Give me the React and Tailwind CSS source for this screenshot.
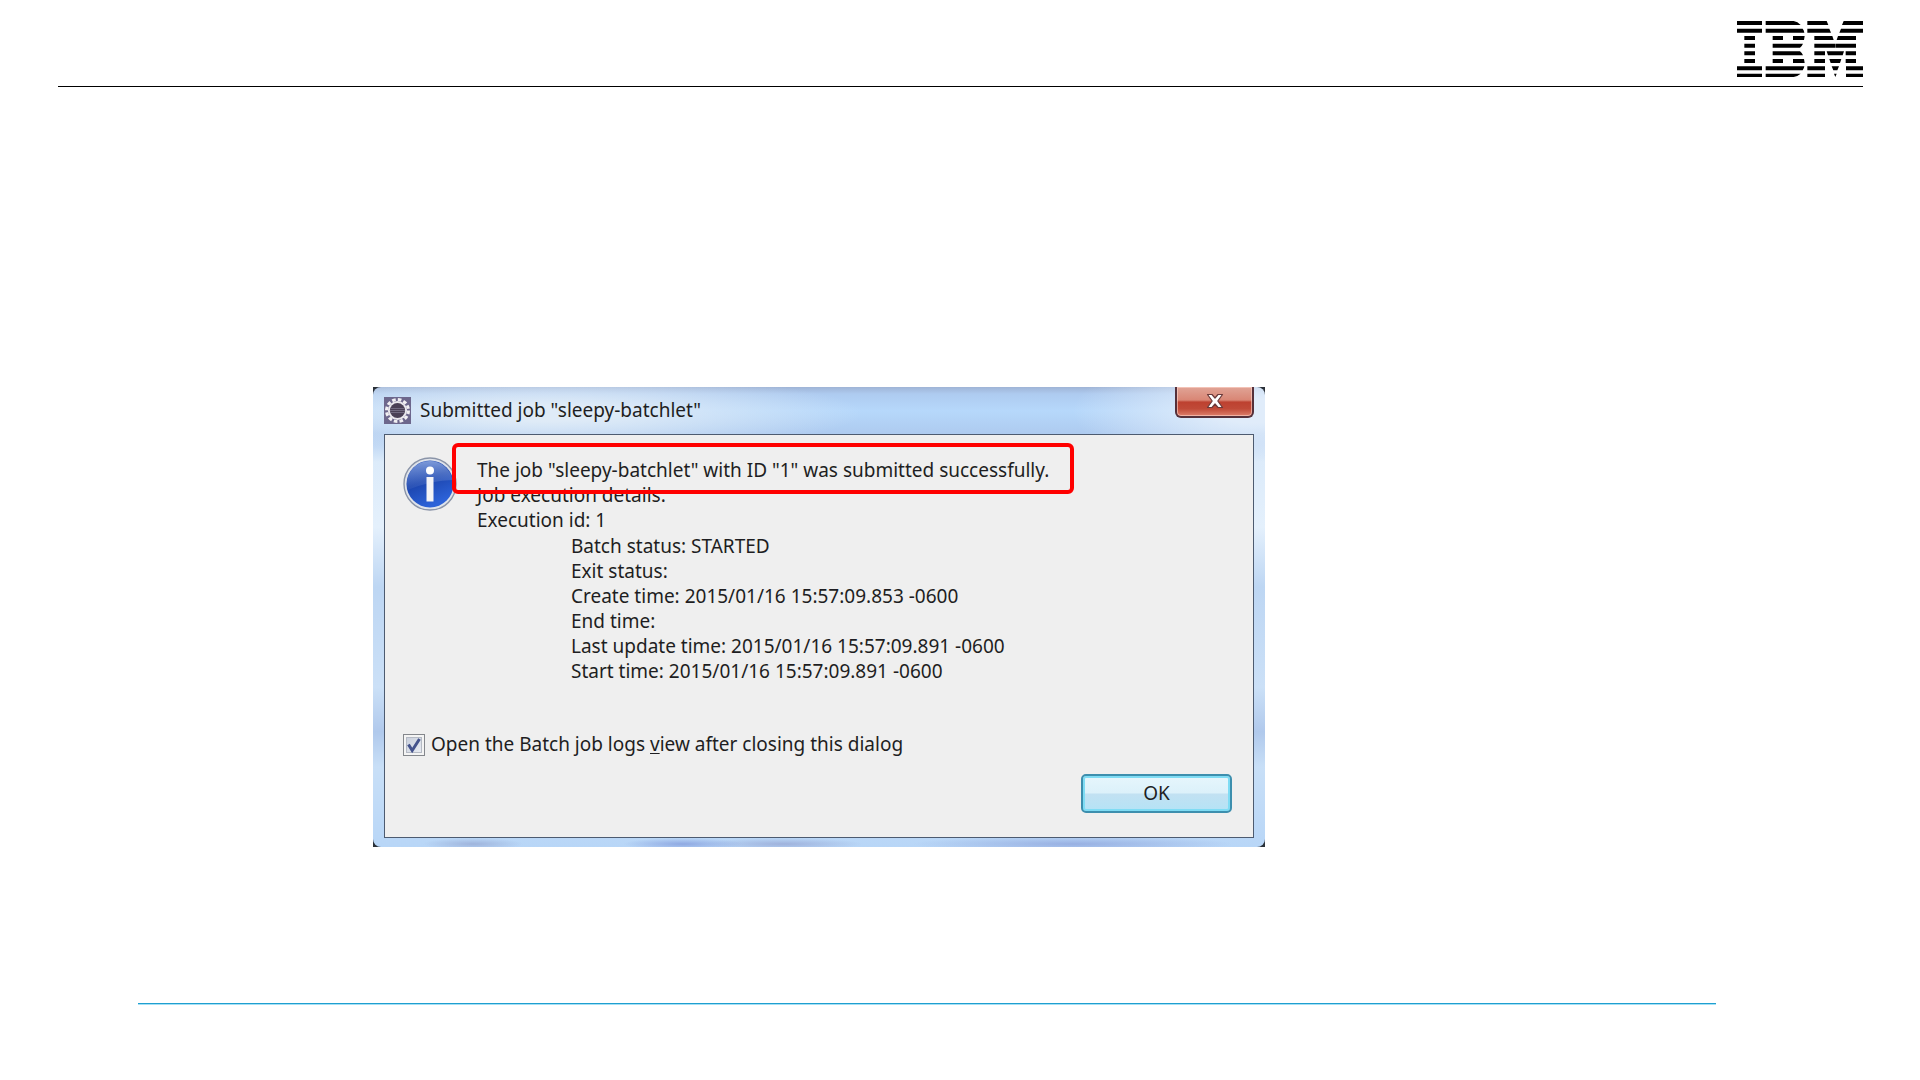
const JOB_DETAILS = [
  'Batch status: STARTED',
  'Exit status:',
  'Create time: 2015/01/16 15:57:09.853 -0600',
  'End time:',
  'Last update time: 2015/01/16 15:57:09.891 -0600',
  'Start time: 2015/01/16 15:57:09.891 -0600',
];

function IbmLogo() {
  return (
    <svg viewBox="51 33 378 168" className="w-[126px] h-14" role="img" aria-label="IBM">
      {/* I */}
      <path d="M51 33h75v12H51zM51 56h75v12H51zM73 78h32v12H73zM73 101h32v12H73zM73 124h32v12H73zM73 147h32v12H73zM51 169h75v12H51zM51 191h75v10H51z" />
      {/* B */}
      <path d="M137 33h84q12 2 21 12H137zM137 56h111q4 5 5 12H137zM158 78h31v12h-31zM219 78h35l-2 12h-33zM158 101h91q-3 7-9 12h-82zM158 124h82q6 5 9 12h-91zM158 147h31v12h-31zM219 147h33l2 12h-35zM137 169h116q-1 7-5 12H137zM137 191h105q-9 8-21 10h-84z" />
      {/* M */}
      <path d="M262 33h58l5 12h-63zM371 33h58v12h-63zM262 56h66l5 12h-71zM363 56h66v12h-71zM283 78h54l4 12h-58zM354 78h54v12h-58zM283 101h62v12h-62zM346 101h62v12h-62zM283 124h32v12h-32zM320 124h52l-4 12h-44zM377 124h31v12h-31zM283 147h32v12h-32zM328 147h36l-4 12h-28zM377 147h31v12h-31zM262 169h53v12h-53zM335 169h22l-5 12h-12zM378 169h51v12h-51zM262 191h53v10h-53zM342 191h8l-4 10zM378 191h51v10h-51z" />
    </svg>
  );
}

function EclipseIcon() {
  return (
    <svg viewBox="0 0 27 27" className="w-[27px] h-[27px]" aria-hidden="true">
      <rect width="27" height="27" fill="#6d678c" />
      <circle cx="13.5" cy="13.5" r="11" fill="none" stroke="#f1eff2" strokeWidth="3" strokeDasharray="3.6 2.16" />
      <circle cx="13.5" cy="13.5" r="9.6" fill="#e9e7ec" />
      <circle cx="13.5" cy="13.5" r="7.6" fill="#4a4055" />
      <path d="M6.5 11.5h14M6 13.5h15M6.5 15.5h14" stroke="#7b758c" strokeWidth="0.8" />
    </svg>
  );
}

function InfoIcon() {
  return (
    <svg viewBox="0 0 54 54" className="w-[54px] h-[54px] shrink-0" aria-hidden="true">
      <defs>
        <linearGradient id="info-fill" x1="0" y1="0" x2="0.4" y2="1">
          <stop offset="0" stopColor="#3f66c4" />
          <stop offset="0.5" stopColor="#1c45ae" />
          <stop offset="1" stopColor="#2c62d8" />
        </linearGradient>
        <linearGradient id="info-gloss" x1="0" y1="0" x2="0" y2="1">
          <stop offset="0" stopColor="#8fa9df" stopOpacity="0.8" />
          <stop offset="1" stopColor="#4f73c8" stopOpacity="0.2" />
        </linearGradient>
      </defs>
      <circle cx="27" cy="27" r="26" fill="#dfe3ea" stroke="#8a94a8" strokeWidth="1.4" />
      <circle cx="27" cy="27" r="23.5" fill="url(#info-fill)" />
      <path d="M27 4a23 23 0 0 1 22.5 19q-20 0-45 10a23 23 0 0 1 22.5-29z" fill="url(#info-gloss)" />
      <circle cx="27" cy="13.5" r="4" fill="#fff" />
      <path d="M23.5 20h7v24.5h-7z" fill="#f3f3f6" />
    </svg>
  );
}

function CloseIcon() {
  return (
    <svg viewBox="0 0 18 16" className="w-[18px] h-4" aria-hidden="true">
      <path
        d="M1.5 1.5h4.5l3 3.5 3-3.5h4.5L11.8 8l4.7 6.5H12L9 11l-3 3.5H1.5L6.2 8z"
        fill="#fff"
        stroke="#6b3a3a"
        strokeWidth="1.2"
        strokeLinejoin="round"
      />
    </svg>
  );
}

function TitleBar() {
  return (
    <div className="flex items-start justify-between px-[11px] h-[47px]">
      <div className="flex items-center gap-[9px] pt-[10px]">
        <EclipseIcon />
        <h1 className="text-[19px] leading-[27px]">Submitted job "sleepy-batchlet"</h1>
      </div>
      <button
        type="button"
        aria-label="Close"
        className="flex items-center justify-center w-[79px] h-[31px] pb-0.5 rounded-b-md border-2 border-t-0 border-[#54303a] bg-[linear-gradient(180deg,#e0a496_0%,#d98675_45%,#bd4130_52%,#c04a38_75%,#dd7f6c_100%)] shadow-[inset_0_0_0_1px_rgba(255,215,205,0.6)]"
      >
        <CloseIcon />
      </button>
    </div>
  );
}

function JobDialog() {
  return (
    <div className="w-[892px] max-w-full bg-[#2a3038]">
      <section
        aria-label="Submitted job"
        className="rounded-lg px-[11px] pb-[9px] bg-[radial-gradient(ellipse_320px_40px_at_170px_26px,#dfebf7_20%,transparent_100%),radial-gradient(ellipse_180px_60px_at_880px_24px,#e0ecfa_20%,transparent_100%),radial-gradient(ellipse_50px_6px_at_100px_457px,#9fb4dc,transparent),radial-gradient(ellipse_60px_6px_at_310px_457px,#8fa9e2,transparent),radial-gradient(ellipse_80px_6px_at_410px_457px,#9fb2dc,transparent),radial-gradient(ellipse_160px_8px_at_700px_457px,#98b0e2,transparent),linear-gradient(180deg,#9fb4d6_0px,#aecbf0_7px,#b6d8fb_24px,#aecbf0_46px,#dcebfa_75px,#e4f0fc_140px,#bdd6f3_200px,#cbe0f7_300px,#b0c9ec_345px,#c8dff7_380px,#b8d6f7_460px)]"
      >
        <div className="-mx-[11px]">
          <TitleBar />
        </div>
        <div className="border border-[#4d5b70] bg-[#efefef]">
          <div className="flex items-start pl-[18px] pt-[22px]">
            <InfoIcon />
            <div className="relative pl-5 pt-px">
              <p>The job "sleepy-batchlet" with ID "1" was submitted successfully.</p>
              <p>Job execution details:</p>
              <p>Execution id: 1</p>
              <ul className="pl-[94px] pt-px">
                {JOB_DETAILS.map((line) => (
                  <li key={line}>{line}</li>
                ))}
              </ul>
              <div className="absolute -left-[5px] -top-[14px] w-[622px] h-[51px] rounded-md border-4 border-[#ff0000]" />
            </div>
          </div>

          <label className="flex items-center gap-1.5 w-fit ml-[18px] mt-12">
            <span className="relative flex w-[22px] h-[22px]">
              <input
                type="checkbox"
                defaultChecked
                className="appearance-none w-[22px] h-[22px] border border-[#84878c] bg-[linear-gradient(135deg,#c3cad8,#eef1f6)] shadow-[inset_0_0_0_2px_#f4f4f4,inset_0_0_0_3px_#b5bac4]"
              />
              <svg viewBox="0 0 22 22" className="absolute inset-0 pointer-events-none" aria-hidden="true">
                <path d="M5.5 10.5l3.7 6L16.5 5" fill="none" stroke="#44538c" strokeWidth="3" />
              </svg>
            </span>
            <span>
              Open the Batch job logs <u className="underline-offset-2">v</u>iew after closing this dialog
            </span>
          </label>

          <div className="flex justify-end pr-[21px] mt-[17px] mb-6">
            <button
              type="button"
              className="w-[151px] h-[39px] rounded-[5px] border-2 border-[#3d8fae] bg-[linear-gradient(180deg,#e6f6fc_0%,#dcf1fa_48%,#c2e1f2_52%,#b4e3f6_100%)] shadow-[inset_0_0_0_2px_#7fdcf4]"
            >
              OK
            </button>
          </div>
        </div>
      </section>
    </div>
  );
}

export default function App() {
  return (
    <div className="min-h-screen flex flex-col bg-white text-[#1e1e22] text-[19px] leading-[25px] font-['Noto_Sans',sans-serif]">
      <header className="ml-[58px] mr-[57px] h-[87px] pt-[21px] flex items-start justify-end border-b border-black">
        <IbmLogo />
      </header>
      <main className="pl-[373px] pt-[300px]">
        <JobDialog />
      </main>
      <footer className="mt-auto mb-[75px] ml-[138px] mr-[204px] h-0.5 border-t border-[#1f9fd0] bg-[#a5e0f5]" />
    </div>
  );
}
